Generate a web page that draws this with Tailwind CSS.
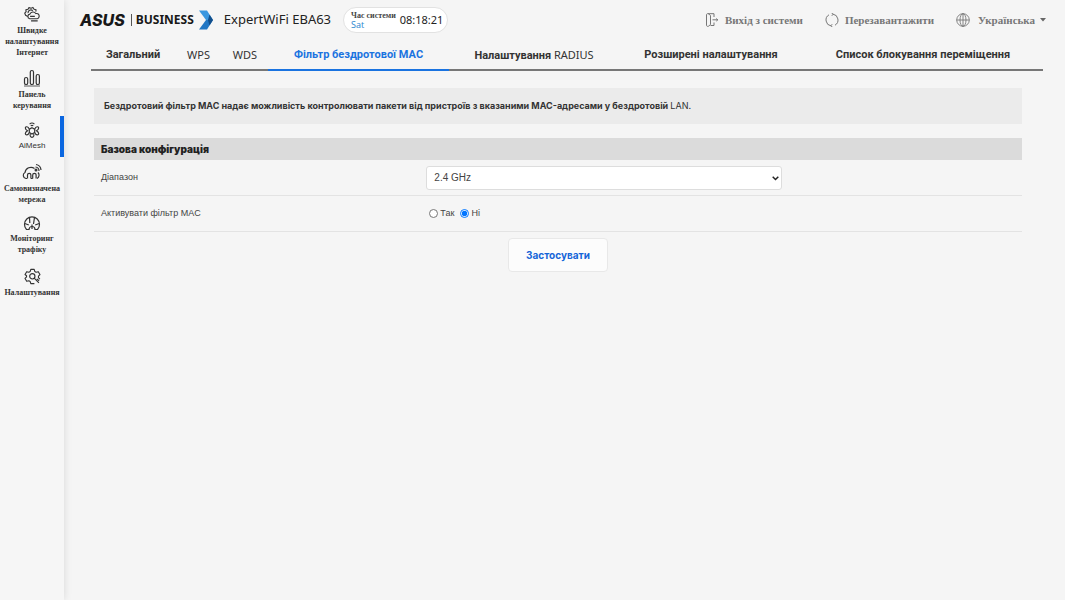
<!DOCTYPE html>
<html lang="uk">
<head>
<meta charset="utf-8">
<meta name="viewport" content="width=device-width, initial-scale=1">
<title>ExpertWiFi EBA63</title>
<script src="https://cdn.jsdelivr.net/npm/@tailwindcss/browser@4"></script>
</head>
<body class="flex min-h-screen bg-[#f5f5f5] font-['Liberation_Sans',sans-serif] text-[9px] text-[#444]">

<nav class="w-16 shrink-0 bg-[#f6f6f6] pt-1.5 shadow-[0_0_8px_rgba(0,0,0,0.12)] font-['Liberation_Serif',serif] text-[8px] leading-[11px] font-bold text-center text-[#333]">
  <a href="#" class="flex h-[63px] flex-col items-center">
    <svg class="mb-0.5 h-[17px] w-[18px] shrink-0" viewBox="0 0 18 18" fill="none" stroke="#333" stroke-width="1.2" stroke-linejoin="round"><path d="M4.500 11 2.200 9.800 1.300 7.500 2.800 6 2.500 4 4.800 3.500 5.800 1.700 8 2.300 10 1.500 11.200 3.500 13.300 4 13 6"/><path d="M4.800 7.500a3 3 0 0 1 5-2.500"/><path d="M6.500 13.500a2.500 2.500 0 0 1 .3-4.900A3.500 3.500 0 0 1 13 8a2.800 2.800 0 0 1 1.500 5.500zM8 15.800h7M7 11h5"/></svg>
    <span>Швидке</span><span>налаштування</span><span>Інтернет</span>
  </a>
  <a href="#" class="flex h-[53px] flex-col items-center">
    <svg class="mb-0.5 h-[18px] w-[18px] shrink-0" viewBox="0 0 18 18" fill="none" stroke="#333" stroke-width="1.200"><rect x="1.500" y="8.500" width="3.200" height="7" rx="1.600"/><rect x="7.300" y="1.500" width="3.200" height="14" rx="1.600"/><rect x="13.200" y="5.500" width="3.200" height="10" rx="1.600"/><path d="M1 17h16" stroke-width=".8"/></svg>
    <span>Панель</span><span>керування</span>
  </a>
  <a href="#" class="-mt-1.5 flex h-[41px] flex-col items-center border-r-4 border-[#0a66e0] pt-1.5 pl-1 font-['Liberation_Sans',sans-serif] font-normal" aria-current="page">
    <svg class="mb-px h-[17px] w-4 shrink-0" viewBox="0 0 18 18" fill="none" stroke="#333" stroke-width="1.300"><path d="M9 5.800 12 7.500v3.700L9 13l-3-1.800V7.500z"/><path d="M6.300 1.800a4 4 0 0 1 5.400 0M7.600 3.800a2 2 0 0 1 2.800 0"/><path d="M6 7.500C4.500 4 1.500 4.200 1.500 6.200c0 1.500 1.500 2.500 2.500 3-1 .6-2.500 1.500-2.500 3.200 0 2 3 2.500 4.500-1.200M12 7.500c1.500-3.500 4.500-3.300 4.500-1.300 0 1.500-1.500 2.500-2.500 3 1 .6 2.500 1.500 2.500 3.200 0 2-3 2.500-4.500-1.200M7.200 12.500c-1 2.500.3 4.300 1.800 4.300s2.800-1.800 1.800-4.300"/></svg>
    <span>AiMesh</span>
  </a>
  <a href="#" class="flex h-[52px] flex-col items-center pt-1.5">
    <svg class="mb-0.5 h-[18px] w-[20px] shrink-0" viewBox="0 0 20 18" fill="none" stroke="#333" stroke-width="1.200"><path d="M5 15.500H4a3.200 3.200 0 0 1-1-6A6 6 0 0 1 12.500 5.500M16 9.500a3.800 3.800 0 0 1-1 6"/><path d="M5.500 15.500V12a1.700 1.700 0 0 1 3.400 0v3.500M10.700 15.500V12a1.700 1.700 0 0 1 3.400 0v3.500M8.900 15.500h1.800"/><path d="M13.500 4a4 4 0 0 1 3.500 4M14 1.500a6 6 0 0 1 5 5.500"/><circle cx="14" cy="7" r=".9" fill="#333"/></svg>
    <span>Самовизначена</span><span>мережа</span>
  </a>
  <a href="#" class="flex h-[53px] flex-col items-center pt-1.5">
    <svg class="mb-0.5 h-4 w-[18px] shrink-0" viewBox="0 0 18 16" fill="none" stroke="#333" stroke-width="1.200"><path d="M3.500 14.500a7.500 7.500 0 1 1 11 0H12a3 3 0 0 0-6 0z"/><path d="M6.500 2.300 6.800 8M11.500 2.300 10.500 9M1.800 8.500l4 1.500M16.200 8.500l-4 1.500M9 14V9.500"/></svg>
    <span>Моніторинг</span><span>трафіку</span>
  </a>
  <a href="#" class="flex flex-col items-center pt-1.5">
    <svg class="mb-0.5 h-[17px] w-[17px] shrink-0" viewBox="0 0 18 18" fill="none" stroke="#333" stroke-width="1.200" stroke-linejoin="round"><path d="M11 16.500H7.200l-.7-2.300-1.300-.7-2.300.6-1.800-3L2.700 9.400V8.200L1.100 6.900l1.800-3 2.300.6 1.300-.7.700-2.300h3.600l.7 2.300 1.300.7 2.300-.6 1.800 3-1.600 1.700v1.600l1.500 1.600"/><circle cx="8.800" cy="8.800" r="2.800"/><path d="m10.800 10.800 5 5M13.500 11.500l2.500 2"/></svg>
    <span>Налаштування</span>
  </a>
</nav>

<div class="min-w-0 flex-1">
  <header class="flex h-10 items-center pl-4 pr-[18px]">
    <div class="flex items-center text-[#181818]">
      <span class="font-[Inter,sans-serif] text-[16px] font-extrabold italic">ASUS</span>
      <span class="ml-1.5 mr-1 h-3 w-px bg-[#555]"></span>
      <span class="font-['Noto_Sans',sans-serif] text-[12px] font-bold">BUSINESS</span>
      <svg class="ml-1 h-5 w-4" viewBox="0 0 16 20"><path d="M1 .5h8L15 10H8z" fill="#3a97e0"/><path d="M8 10h7L9 19.500H1z" fill="#2377c4"/><path d="M11.500 4.500 15 10l-3.500 5.500L10 10z" fill="#124f8c"/></svg>
    </div>
    <h1 class="ml-2.5 font-['Noto_Sans',sans-serif] text-[13px] text-[#222]">ExpertWiFi EBA63</h1>
    <div class="ml-3 flex h-[26px] items-center gap-1 rounded-full border border-[#e2e2e2] bg-white pr-1 pl-[7px]">
      <div class="flex flex-col leading-[9px]">
        <span class="font-['Liberation_Serif',serif] text-[8px] font-bold">Час системи</span>
        <span class="font-['Open_Sans',sans-serif] text-[9px] text-[#2a86cf]">Sat</span>
      </div>
      <time class="font-['Noto_Sans',sans-serif] text-[11px] text-[#222]">08:18:21</time>
    </div>
    <div class="ml-auto flex items-center gap-[22px] font-['Liberation_Serif',serif] text-[11px] font-bold text-[#777]">
      <button class="flex items-center gap-1.5">
        <svg class="h-3.5 w-3.5" viewBox="0 0 14 14" fill="none" stroke="#777" stroke-width="1"><path d="M5.500 2.500 3.500.8C2.500.3 1.500.8 1.500 1.700v10.600c0 .9 1 1.400 2 .9l2-1.700zM3 .7h6V4M5.500 12.500H9V9.500M7.500 6.800H13M11.300 5.500l1.500 1.300-1.500 1.300"/></svg>
        Вихід з системи
      </button>
      <button class="flex items-center gap-1.5">
        <svg class="h-3.5 w-3.5" viewBox="0 0 14 14" fill="none" stroke="#777" stroke-width="1"><path d="M6 12.900A6 6 0 0 1 4 1.800M8 1.100a6 6 0 0 1 2 11.100M6.500 0 8.200 1.200 6.800 2.800M7.500 14 5.800 12.800 7.200 11.200"/></svg>
        Перезавантажити
      </button>
      <button class="flex items-center gap-2">
        <svg class="h-3.5 w-3.5" viewBox="0 0 14 14" fill="none" stroke="#777" stroke-width=".9"><circle cx="7" cy="7" r="6.300"/><ellipse cx="7" cy="7" rx="3" ry="6.300"/><path d="M7 .7v12.600M.7 7h12.600"/></svg>
        Українська
        <svg class="-ml-1 h-1 w-2" viewBox="0 0 8 4"><path d="M1 0h6L4 3.500z" fill="#666"/></svg>
      </button>
    </div>
  </header>

  <nav class="ml-[27px] mr-[22px] flex h-[31px] border-b-2 border-[#777] text-center font-[Roboto,sans-serif] text-[11px] leading-[30px] font-bold whitespace-nowrap text-[#333]">
    <a href="#" class="flex-[84]">Загальний</a>
    <a href="#" class="flex-[47] font-['Noto_Sans',sans-serif] font-normal">WPS</a>
    <a href="#" class="flex-[46] font-['Noto_Sans',sans-serif] font-normal">WDS</a>
    <a href="#" class="h-[31px] flex-[181] border-b-2 border-[#1a73e0] text-[#1a73e0]" aria-current="page">Фільтр бездротової MAC</a>
    <a href="#" class="flex-[170]">Налаштування <span class="font-['Noto_Sans',sans-serif] font-normal">RADIUS</span></a>
    <a href="#" class="flex-[184]">Розширені налаштування</a>
    <a href="#" class="flex-[240]">Список блокування переміщення</a>
  </nav>

  <main class="ml-[30px] mr-[43px] pt-[17px]">
    <p class="flex min-h-9 items-center bg-[#ebebeb] px-2.5 font-[Inter,sans-serif] font-bold text-[#333]"><span>Бездротовий фільтр MAC надає можливість контролювати пакети від пристроїв з вказаними MAC-адресами у бездротовій <span class="font-normal">LAN.</span></span></p>
    <form>
      <h2 class="mt-3.5 bg-[#dbdbdb] px-[7px] font-['Inter',sans-serif] text-[10px] leading-[22px] font-black text-[#222]">Базова конфігурація</h2>
      <div class="flex h-9 items-center border-b border-[#e3e3e3] pl-[7px]">
        <label for="band" class="w-[35%]">Діапазон</label>
        <div class="relative ml-[3px]">
          <select id="band" class="block h-6 w-[356px] appearance-none rounded-[3px] border border-[#ddd] bg-white pl-[7px] text-[10px]"><option>2.4 GHz</option></select>
          <svg class="pointer-events-none absolute top-2.5 right-[3px] h-[5px] w-[7px]" viewBox="0 0 7 5" fill="none" stroke="#222" stroke-width="1.500"><path d="m.7.8 2.800 2.700L6.300.8"/></svg>
        </div>
      </div>
      <fieldset class="flex h-9 items-center border-b border-[#e3e3e3] pl-[7px]">
        <span id="mac" class="w-[35%]">Активувати фільтр MAC</span>
        <div role="radiogroup" aria-labelledby="mac" class="flex gap-1.5 pl-1.5">
          <label class="flex items-center gap-0.5"><input type="radio" name="f" class="h-[9px] w-[9px]">Так</label>
          <label class="flex items-center gap-0.5"><input type="radio" name="f" checked class="h-[9px] w-[9px]">Ні</label>
        </div>
      </fieldset>
      <button type="button" class="mx-auto mt-1.5 block h-[34px] w-[100px] rounded border border-[#e8e8e8] bg-[#fcfcfc] font-['Inter',sans-serif] text-[10px] font-bold text-[#1565d8]">Застосувати</button>
    </form>
  </main>
</div>
</body>
</html>
